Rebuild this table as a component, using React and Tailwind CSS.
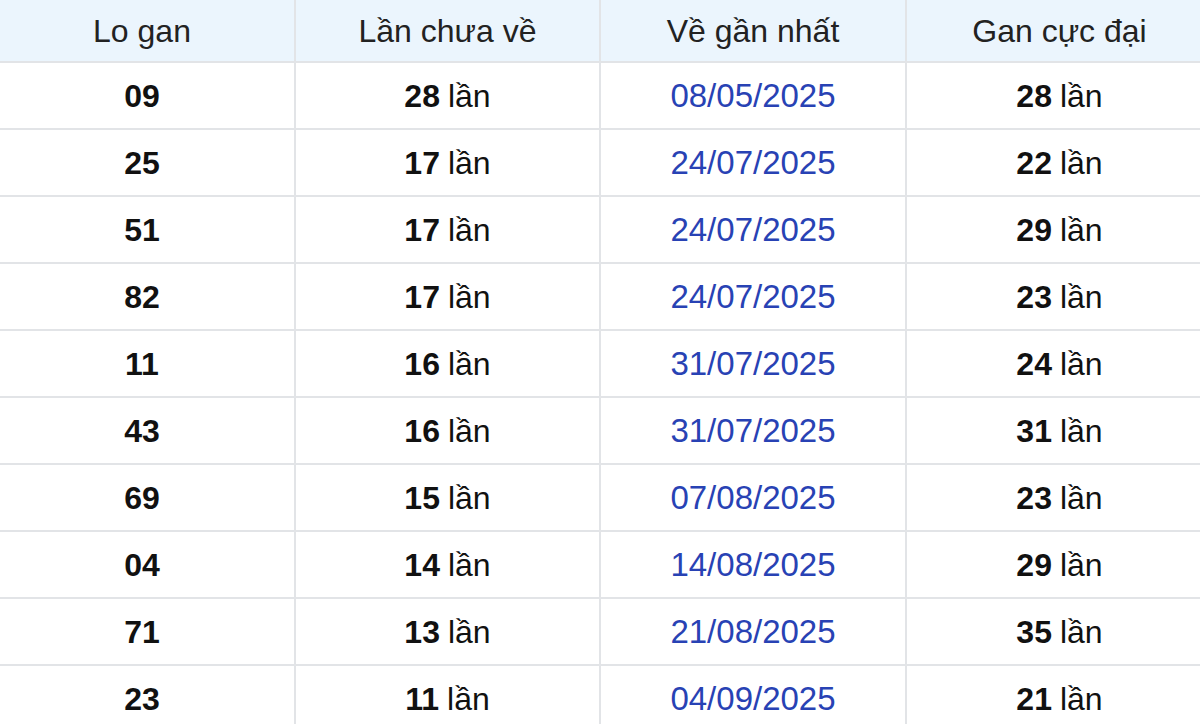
// App.jsx
const rows = [
  { lo: "09", chua: 28, date: "08/05/2025", max: 28 },
  { lo: "25", chua: 17, date: "24/07/2025", max: 22 },
  { lo: "51", chua: 17, date: "24/07/2025", max: 29 },
  { lo: "82", chua: 17, date: "24/07/2025", max: 23 },
  { lo: "11", chua: 16, date: "31/07/2025", max: 24 },
  { lo: "43", chua: 16, date: "31/07/2025", max: 31 },
  { lo: "69", chua: 15, date: "07/08/2025", max: 23 },
  { lo: "04", chua: 14, date: "14/08/2025", max: 29 },
  { lo: "71", chua: 13, date: "21/08/2025", max: 35 },
  { lo: "23", chua: 11, date: "04/09/2025", max: 21 },
];

const headers = ["Lo gan", "Lần chưa về", "Về gần nhất", "Gan cực đại"];

const Cell = ({ children, last, className = "" }) => (
  <div
    className={`flex items-center justify-center border-b-2 border-[#e2e4e7] ${
      last ? "" : "border-r-2"
    } ${className}`}
  >
    {children}
  </div>
);

const App = () => {
  return (
    <div className="w-[1200px] h-[724px] overflow-hidden bg-white font-['Liberation_Sans',Arial,sans-serif] text-[32px]">
      <div className="-ml-[10px] w-[1222px] grid grid-cols-[306px_305px_306px_305px]">
        {headers.map((h, i) => (
          <Cell key={h} last={i === 3} className="h-[63px] bg-[#ebf5fd] text-[#222]">
            {h}
          </Cell>
        ))}
        {rows.map((r) => (
          <div key={r.lo} className="contents">
            <Cell className="h-[67px] font-bold text-[#111]">{r.lo}</Cell>
            <Cell className="h-[67px] text-[#111]">
              <span className="font-bold">{r.chua}</span>
              <span className="ml-[8px]">lần</span>
            </Cell>
            <Cell className="h-[67px] text-[33px] text-[#2842b4]">{r.date}</Cell>
            <Cell last className="h-[67px] text-[#111]">
              <span className="font-bold">{r.max}</span>
              <span className="ml-[8px]">lần</span>
            </Cell>
          </div>
        ))}
      </div>
    </div>
  );
};

export default App;
